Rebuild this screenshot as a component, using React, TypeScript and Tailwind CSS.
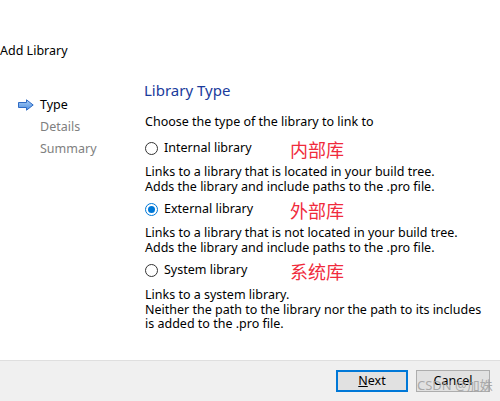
import React, { useState } from 'react';

type LibKind = 'internal' | 'external' | 'system';

const OPTIONS: { id: LibKind; label: string; note: string; lines: string[]; mt: string; descMt: string }[] = [
  {
    id: 'internal',
    label: 'Internal library',
    note: '内部库',
    lines: [
      'Links to a library that is located in your build tree.',
      'Adds the library and include paths to the .pro file.',
    ],
    mt: 'mt-[10px]',
    descMt: 'mt-[9px]',
  },
  {
    id: 'external',
    label: 'External library',
    note: '外部库',
    lines: [
      'Links to a library that is not located in your build tree.',
      'Adds the library and include paths to the .pro file.',
    ],
    mt: 'mt-[7px]',
    descMt: 'mt-[9px]',
  },
  {
    id: 'system',
    label: 'System library',
    note: '系统库',
    lines: [
      'Links to a system library.',
      'Neither the path to the library nor the path to its includes',
      'is added to the .pro file.',
    ],
    mt: 'mt-[7px]',
    descMt: 'mt-[10px]',
  },
];

const StepArrow = () => (
  <svg width="16" height="12" viewBox="0 0 16 12" className="shrink-0">
    <defs>
      <linearGradient id="arrowFill" x1="0" y1="0" x2="0" y2="1">
        <stop offset="0" stopColor="#a9cdf5" />
        <stop offset="1" stopColor="#4d8fe0" />
      </linearGradient>
    </defs>
    <path d="M0.5 3.5 H8.5 V0.8 L15.2 6 L8.5 11.2 V8.5 H0.5 Z" fill="url(#arrowFill)" stroke="#2f6bc4" strokeWidth="1" strokeLinejoin="round" />
  </svg>
);

const Radio: React.FC<{ checked: boolean }> = ({ checked }) => (
  <span
    className={`w-[13px] h-[13px] rounded-full border flex items-center justify-center bg-white shrink-0 ${checked ? 'border-[#0078d7]' : 'border-[#333333]'}`}
  >
    {checked && <span className="w-[7px] h-[7px] rounded-full bg-[#0078d7]" />}
  </span>
);

export default function App() {
  const [kind, setKind] = useState<LibKind>('external');

  return (
    <div className="w-[500px] h-[401px] bg-white flex flex-col text-[12.5px] text-black overflow-hidden" style={{ fontFamily: '"Noto Sans", "Noto Sans CJK SC", sans-serif' }}>
      <div className="h-[360px] flex flex-col">
        <div className="pt-[43px] leading-[16px]">Add Library</div>

        <div className="flex flex-1">
          {/* wizard steps */}
          <div className="w-[144px] pt-[35px] pl-[18px]">
            <div className="flex items-center h-[22px] gap-[6px]">
              <StepArrow />
              <span>Type</span>
            </div>
            <div className="h-[22px] leading-[22px] pl-[22px] text-[#808080]">Details</div>
            <div className="h-[22px] leading-[22px] pl-[22px] text-[#808080]">Summary</div>
          </div>

          {/* page */}
          <div className="flex-1 pt-[21px]">
            <div className="text-[15px] leading-[20px] text-[#1a3b9c]">Library Type</div>
            <div className="mt-[14px] leading-[16px] pl-px">Choose the type of the library to link to</div>

            {OPTIONS.map(opt => (
              <div key={opt.id} className={opt.mt}>
                <button
                  type="button"
                  onClick={() => setKind(opt.id)}
                  className="relative flex items-center h-[16px] pl-px gap-[6px] w-full text-left"
                >
                  <Radio checked={kind === opt.id} />
                  <span>{opt.label}</span>
                  <span className="absolute left-[146px] top-[1px] text-[18px] leading-[18px] text-[#f02b3c]">{opt.note}</span>
                </button>
                <div className={`${opt.descMt} pl-px leading-[14.5px]`}>
                  {opt.lines.map(line => (
                    <div key={line}>{line}</div>
                  ))}
                </div>
              </div>
            ))}
          </div>
        </div>
      </div>

      {/* button bar */}
      <div className="relative flex-1 bg-[#f0f0f0] border-t border-[#dfdfdf] flex justify-end items-start pt-[9px] pr-[10px] gap-[8px]">
        <button type="button" className="w-[72px] h-[22px] bg-[#e1e1e1] border-2 border-[#0078d7] flex items-center justify-center leading-none">
          <span><span className="underline">N</span>ext</span>
        </button>
        <button type="button" className="w-[74px] h-[22px] bg-[#e1e1e1] border border-[#adadad] flex items-center justify-center leading-none">
          Cancel
        </button>
        <span className="absolute left-[417px] top-[15px] text-[13px] leading-[18px] text-[#9a9a9a]/80 pointer-events-none">CSDN @加姝</span>
      </div>
    </div>
  );
}
